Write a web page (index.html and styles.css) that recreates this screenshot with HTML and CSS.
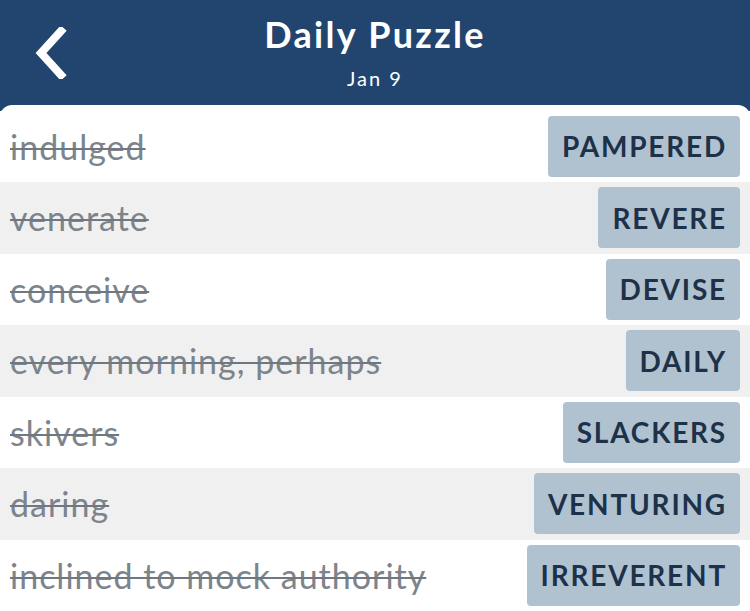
FILE: index.html
```html
<!DOCTYPE html>
<html>
<head>
<meta charset="utf-8">
<link rel="stylesheet" href="styles.css">
</head>
<body>
<header class="topbar">
  <button class="back" aria-label="Back">
    <svg width="34" height="52" viewBox="0 0 34 52"><path d="M28 4 L8 26 L28 48" fill="none" stroke="#fff" stroke-width="8" stroke-linecap="square" stroke-linejoin="miter"/></svg>
  </button>
  <div class="titles">
    <h1 class="title">Daily Puzzle</h1>
    <div class="subtitle">Jan 9</div>
  </div>
</header>
<main class="panel">
  <div class="row"><span class="clue">indulged</span><span class="answer">PAMPERED</span></div>
  <div class="row alt"><span class="clue">venerate</span><span class="answer">REVERE</span></div>
  <div class="row"><span class="clue">conceive</span><span class="answer">DEVISE</span></div>
  <div class="row alt"><span class="clue">every morning, perhaps</span><span class="answer">DAILY</span></div>
  <div class="row"><span class="clue">skivers</span><span class="answer">SLACKERS</span></div>
  <div class="row alt"><span class="clue">daring</span><span class="answer">VENTURING</span></div>
  <div class="row"><span class="clue">inclined to mock authority</span><span class="answer">IRREVERENT</span></div>
</main>
</body>
</html>
```
FILE: styles.css
```css
* { box-sizing: border-box; }
html, body { margin: 0; padding: 0; }
body {
  width: 750px;
  height: 611px;
  overflow: hidden;
  background: #21456f;
  font-family: Lato, "Open Sans", sans-serif;
}
.topbar {
  height: 105px;
  position: relative;
  display: flex;
  justify-content: center;
}
.back {
  position: absolute;
  left: 33px;
  top: 27px;
  background: none;
  border: 0;
  padding: 0;
  line-height: 0;
}
.titles {
  display: flex;
  flex-direction: column;
  align-items: center;
  padding-top: 12px;
}
.title {
  margin: 0;
  color: #fff;
  font-size: 36px;
  font-weight: 700;
  line-height: 44px;
  letter-spacing: 2.3px;
}
.subtitle {
  color: #fff;
  font-size: 20px;
  line-height: 24px;
  margin-top: 10px;
  letter-spacing: 2px;
}
.panel {
  background: #fff;
  border-radius: 12px 12px 0 0;
  padding-top: 5.5px;
  height: 506px;
}
.row {
  height: 71.5px;
  display: flex;
  align-items: center;
  justify-content: space-between;
  padding: 0 10px;
  background: #fff;
}
.row.alt { background: #f0f0f0; }
.clue {
  color: #7c848c;
  font-size: 34px;
  letter-spacing: 1px;
  text-decoration: line-through;
  text-decoration-thickness: 2px;
  text-decoration-color: #6f7780;
}
.answer {
  height: 61px;
  display: flex;
  align-items: center;
  padding: 0 13px 0 14px;
  background: #b0c2d0;
  border-radius: 4px;
  color: #1d3149;
  font-size: 28px;
  font-weight: 700;
  letter-spacing: 1.8px;
}
```
